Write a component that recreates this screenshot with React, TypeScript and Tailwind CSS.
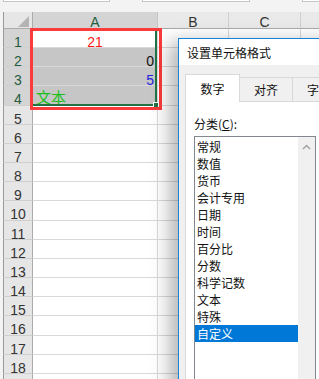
import React from 'react';

const CJK = { fontFamily: "'Noto Sans CJK SC', 'Noto Sans', sans-serif" };
const LATIN = { fontFamily: "'Liberation Sans', Arial, sans-serif" };

const CATEGORIES = ['常规', '数值', '货币', '会计专用', '日期', '时间', '百分比', '分数', '科学记数', '文本', '特殊', '自定义'];

type Cell = { text: string; color: string; align: 'left' | 'center' | 'right'; cjk?: boolean };

const CELLS: Record<number, Cell> = {
  1: { text: '21', color: 'text-[#ff1a1a]', align: 'center' },
  2: { text: '0', color: 'text-[#111]', align: 'right' },
  3: { text: '5', color: 'text-[#2323e0]', align: 'right' },
  4: { text: '文本', color: 'text-[#19c019]', align: 'left', cjk: true },
};

function Sheet() {
  const rows = Array.from({ length: 19 }, (_, i) => i + 1);
  return (
    <div className="relative" style={LATIN}>
      {/* 编辑栏 아래 여백 */}
      <div className="flex h-[12px] bg-[#f3f3f3]">
        <div className="ml-[3px] h-[2px] w-[107px] border-x border-b border-[#c6c6c6] bg-white" />
        <div className="ml-[32px] h-[2px] w-[108px] border-x border-b border-[#c6c6c6] bg-white" />
        <div className="ml-[52px] h-[2px] flex-1 border-l border-b border-[#c6c6c6] bg-white" />
      </div>

      {/* 列头 */}
      <div className="flex h-[17px] text-[14px] leading-[14px]">
        <div className="w-[3px] bg-[#f3f3f3]" />
        <div className="relative w-[30px] border-l border-r border-b border-l-[#9a9a9a] border-r-[#ababab] border-b-[#ababab] bg-[#e6e6e6]">
          <svg className="absolute left-[14px] top-[4px]" width="11" height="11" viewBox="0 0 11 11">
            <polygon points="11,0 11,11 0,11" fill="#b4b4b4" />
          </svg>
        </div>
        <div className="w-[125px] border-r border-b border-r-[#c6c6c6] border-b-[#ababab] bg-[#d4d4d4] pt-[3px] text-center text-[#245c3d]">A</div>
        <div className="w-[71px] border-r border-b border-r-[#d0d0d0] border-b-[#ababab] bg-[#e9e9e9] pt-[3px] text-center text-[#333]">B</div>
        <div className="w-[72px] border-r border-b border-r-[#d0d0d0] border-b-[#ababab] bg-[#e9e9e9] pt-[3px] text-center text-[#333]">C</div>
        <div className="flex-1 border-b border-b-[#ababab] bg-[#e9e9e9]" />
      </div>

      {rows.map((r) => {
        const cell = CELLS[r];
        const selected = r <= 4;
        const shaded = r >= 2 && r <= 4;
        return (
          <div key={r} className="flex h-[19.17px] text-[14px] leading-[14px]">
            <div className="w-[3px] bg-[#f3f3f3]" />
            <div
              className={`w-[30px] border-l border-r border-b border-l-[#9a9a9a] border-r-[#ababab] border-b-[#cfcfcf] pt-[6px] text-center ${
                selected ? 'bg-[#d4d4d4] text-[#245c3d]' : 'bg-[#e6e6e6] text-[#333]'
              }`}
            >
              {r}
            </div>
            <div
              className={`w-[125px] border-r border-b border-[#d9d9d9] ${shaded ? 'bg-[#c6c6c6]' : 'bg-white'} ${
                cell?.cjk ? 'pl-[3px] pt-[3px]' : 'px-[3px] pt-[6px]'
              }`}
            >
              {cell && (
                <div
                  className={`${cell.color} ${cell.align === 'center' ? 'text-center' : cell.align === 'right' ? 'text-right' : 'text-left'} ${
                    cell.cjk ? 'text-[15px] leading-[15px]' : ''
                  }`}
                  style={cell.cjk ? CJK : undefined}
                >
                  {cell.text}
                </div>
              )}
            </div>
            <div className="w-[71px] border-r border-b border-[#d9d9d9] bg-white" />
            <div className="w-[72px] border-r border-b border-[#d9d9d9] bg-white" />
            <div className="flex-1 border-b border-[#d9d9d9] bg-white" />
          </div>
        );
      })}

      {/* 선택 영역 테두리 */}
      <div className="absolute left-[30px] top-[28px] h-[78px] w-[127px] border-2 border-[#217346]">
        <div className="absolute -bottom-[4px] -right-[4px] h-[6px] w-[6px] border border-white bg-[#217346]" />
      </div>
      {/* 빨간 표시 */}
      <div className="absolute left-[30px] top-[28px] h-[82px] w-[132px] border-[3px] border-[#fb3b3b]" />
    </div>
  );
}

function FormatDialog() {
  return (
    <div
      className="absolute left-[178px] top-[38px] flex h-[360px] w-[170px] flex-col border border-[#1883d7] bg-[#f0f0f0] shadow-[-8px_4px_18px_rgba(0,0,0,0.3)]"
      style={CJK}
    >
      <div className="flex h-[31px] items-center bg-white pl-[8px] pt-[1px] text-[12px] text-[#111]">设置单元格格式</div>

      <div className="flex flex-1 flex-col pl-[6px] pt-[9px]">
        {/* 탭 */}
        <div className="relative z-10 flex items-end text-[12px] text-[#111]">
          <div className="-mb-px flex h-[28px] w-[55px] items-center justify-center border border-b-0 border-[#d9d9d9] bg-white pt-[1px]">
            数字
          </div>
          <div className="flex h-[24px] w-[53px] items-center justify-center border border-l-0 border-b-0 border-[#d9d9d9] bg-[#f0f0f0] pt-[1px]">
            对齐
          </div>
          <div className="flex h-[24px] flex-1 items-center border border-l-0 border-b-0 border-[#d9d9d9] bg-[#f0f0f0] pl-[14px] pt-[1px]">
            字
          </div>
        </div>

        {/* 패널 */}
        <div className="flex-1 border border-[#d9d9d9] bg-white pl-[8px] pt-[14px]">
          <div className="text-[12px] leading-[16px] text-[#111]">
            分类(<span className="underline">C</span>):
          </div>
          <div className="mt-[4px] flex h-[260px] w-[122px] border border-[#828790] bg-white">
            <div className="w-[103px] pt-[1px]">
              {CATEGORIES.map((c) => (
                <div
                  key={c}
                  className={`h-[17px] pl-[2px] text-[12px] leading-[17px] ${
                    c === '自定义' ? 'bg-[#0078d7] text-white' : 'text-[#111]'
                  }`}
                >
                  {c}
                </div>
              ))}
            </div>
            <div className="flex w-[17px] justify-center bg-[#f0f0f0] pt-[7px]">
              <svg width="9" height="6" viewBox="0 0 9 6">
                <polyline points="1,5 4.5,1.5 8,5" fill="none" stroke="#a3a3a3" strokeWidth="1.5" />
              </svg>
            </div>
          </div>
        </div>
      </div>
    </div>
  );
}

export default function App() {
  return (
    <div className="relative h-[379px] w-[319px] overflow-hidden bg-white">
      <Sheet />
      <FormatDialog />
    </div>
  );
}
